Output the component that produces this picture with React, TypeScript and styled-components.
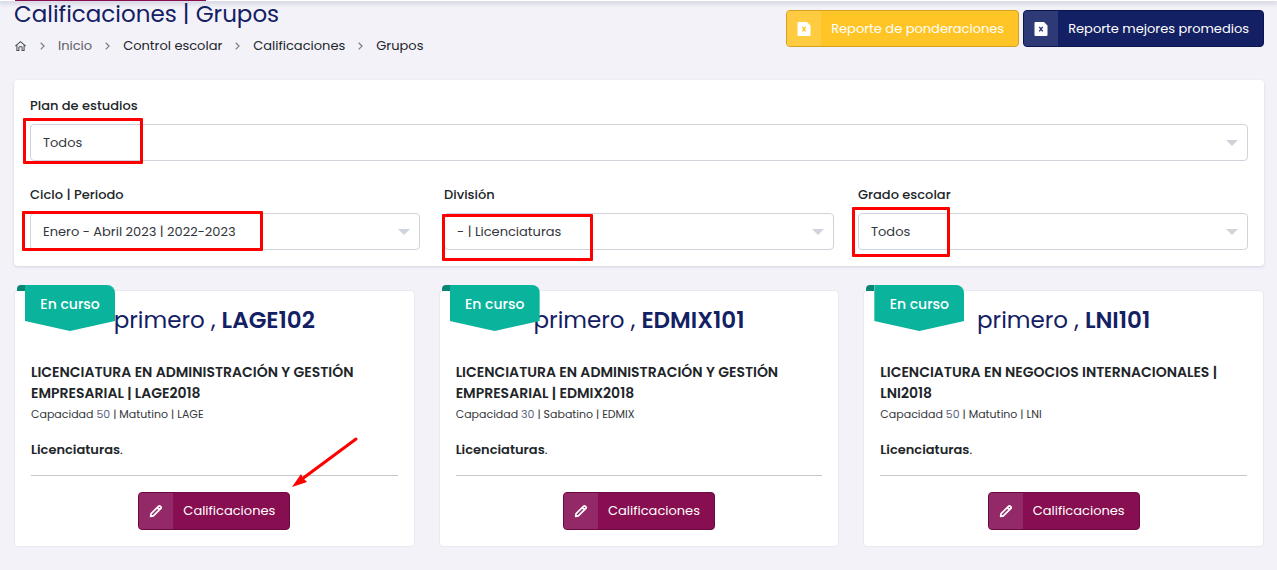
import React from "react";
import styled, { createGlobalStyle } from "styled-components";

const GlobalStyle = createGlobalStyle`
  *, *::before, *::after { box-sizing: border-box; }
  body {
    margin: 0;
    background: #f3f2f9;
    color: #212529;
    font-family: Poppins, Inter, "Open Sans", sans-serif;
    font-size: 13px;
    line-height: 20px;
  }
  h1, h2, h3, p, ol { margin: 0; padding: 0; }
  button, select { font-family: inherit; }
`;

const TopBar = styled.div`
  height: 1px;
  padding: 0 15px;
  background: #fff;
  box-shadow: 0 1px 5px 1px rgba(74, 84, 120, 0.3);
`;

const TopBarTab = styled.div`
  width: 191px;
  height: 1px;
  background: #870e50;
`;

const Page = styled.main`
  padding: 0 13px 23px 14px;
`;

const Header = styled.header`
  display: flex;
  justify-content: space-between;
  align-items: flex-start;
  height: 79px;
`;

const PageTitle = styled.h1`
  color: #132063;
  font-size: 23px;
  font-weight: 400;
  line-height: 27px;
`;

const Breadcrumb = styled.ol`
  display: flex;
  align-items: center;
  gap: 12px;
  margin-top: 8px;
  list-style: none;
  line-height: 20px;
`;

const Crumb = styled.li`
  display: flex;
  align-items: center;
  gap: 12px;
`;

const CrumbLink = styled.a<{ $muted?: boolean }>`
  display: flex;
  color: ${(p) => (p.$muted ? "#5b6068" : "#212529")};
  text-decoration: none;
`;

const HeaderActions = styled.div`
  display: flex;
  gap: 4px;
  padding-top: 9px;
`;

const palette = {
  yellow: { base: "#ffc527", edge: "#d6a021", icon: "#ffcb41" },
  navy: { base: "#132063", edge: "#0a1550", icon: "#2e3a75" },
  wine: { base: "#870e50", edge: "#6b0a40", icon: "#942968" },
};

const ActionButton = styled.button<{ $tone: keyof typeof palette }>`
  display: flex;
  align-items: stretch;
  height: ${(p) => (p.$tone === "wine" ? 38 : 37)}px;
  padding: 0;
  overflow: hidden;
  border: 1px solid ${(p) => palette[p.$tone].edge};
  border-radius: 4px;
  background: ${(p) => palette[p.$tone].base};
  color: #fff;
  font-size: 13px;
  font-weight: 400;
  line-height: 20px;
  white-space: nowrap;
  cursor: pointer;
`;

const ButtonIcon = styled.span<{ $tone: keyof typeof palette }>`
  display: flex;
  flex: 0 0 34px;
  align-items: center;
  justify-content: center;
  background: ${(p) => palette[p.$tone].icon};
`;

const ButtonText = styled.span`
  align-self: center;
  padding: 0 14px 0 10px;
`;

const Filters = styled.form`
  display: grid;
  grid-template-columns: repeat(3, minmax(0, 1fr));
  gap: 24px;
  padding: 16px;
  border-radius: 4px;
  background: #fff;
  box-shadow: 0 1px 3px rgba(60, 60, 100, 0.16);
`;

const Field = styled.div<{ $wide?: boolean }>`
  grid-column: ${(p) => (p.$wide ? "1 / -1" : "auto")};
`;

const FieldLabel = styled.label`
  display: block;
  margin-bottom: 8px;
  font-weight: 500;
  line-height: 20px;
`;

const SelectBox = styled.div`
  position: relative;
`;

const Select = styled.select`
  display: block;
  width: 100%;
  height: 37px;
  padding: 0 32px 0 12px;
  appearance: none;
  border: 1px solid #ced4da;
  border-radius: 4px;
  background: #fff;
  color: #33363b;
  font-size: 13px;
`;

const Caret = styled.span`
  position: absolute;
  top: 16px;
  right: 10px;
  border: 6px solid transparent;
  border-top-color: #ced4da;
  border-bottom-width: 0;
  pointer-events: none;
`;

const Highlight = styled.span<{ $top: number; $left: number; $width: number; $height: number }>`
  position: absolute;
  top: ${(p) => p.$top}px;
  left: ${(p) => p.$left}px;
  width: ${(p) => p.$width}px;
  height: ${(p) => p.$height}px;
  border: 3px solid #fe0000;
  border-radius: 1px;
  pointer-events: none;
`;

const Groups = styled.section`
  display: grid;
  grid-template-columns: repeat(3, minmax(0, 1fr));
  gap: 24px;
  margin-top: 24px;
`;

const Card = styled.article`
  position: relative;
  display: flex;
  flex-direction: column;
  padding: 16px;
  border: 1px solid #e8e8f0;
  border-radius: 4px;
  background: #fff;
`;

const Ribbon = styled.div`
  position: absolute;
  top: -6px;
  left: 10px;
  width: 90px;
  height: 46px;
  padding-top: 9px;
  border-top-right-radius: 8px;
  background: #0ab39c;
  clip-path: polygon(0 0, 100% 0, 100% 78%, 50% 100%, 0 78%);
  color: #fff;
  font-size: 14px;
  font-weight: 500;
  line-height: 20px;
  text-align: center;
`;

const RibbonFold = styled.div`
  position: absolute;
  top: -6px;
  left: 2px;
  width: 8px;
  height: 6px;
  border-top-left-radius: 4px;
  background: #078673;
`;

const GroupTitle = styled.h2`
  color: #132063;
  font-size: 23px;
  font-weight: 400;
  line-height: 27px;
  text-align: center;
`;

const GroupCode = styled.strong`
  font-weight: 600;
`;

const Program = styled.h3`
  margin-top: 28px;
  font-size: 14px;
  font-weight: 600;
  line-height: 21px;
`;

const Capacity = styled.p`
  color: #33363b;
  font-size: 11px;
  line-height: 21px;
`;

const Muted = styled.span`
  color: #5a6780;
`;

const Division = styled.p`
  margin-top: 15px;
  padding-bottom: 15px;
  border-bottom: 1px solid #c6c7c9;
  line-height: 20px;
`;

const DivisionName = styled.strong`
  font-weight: 600;
`;

const CardAction = styled.div`
  position: relative;
  align-self: center;
  margin-top: 16px;
`;

const Arrow = styled.svg`
  position: absolute;
  right: -70px;
  bottom: 40px;
  width: 70px;
  height: 54px;
  pointer-events: none;
`;

const HomeIcon = () => (
  <svg width="13" height="12" viewBox="0 0 13 12" fill="none" stroke="#4d5258" strokeWidth="1.1">
    <path d="M1.3 6.2 6.5 1.7 11.7 6.2M2.9 5.2v5.3h2V7.500c0-.5.3-.8.8-.8h1.600c.5 0 .8.3.8.8v3h2V5.200" />
  </svg>
);

const Chevron = () => (
  <svg width="7" height="10" viewBox="0 0 7 10" fill="none" stroke="#7b7f90" strokeWidth="1.3" aria-hidden="true">
    <path d="m1.700 1.800 3.300 3.300-3.300 3.300" />
  </svg>
);

const ExcelIcon = ({ mark }: { mark: string }) => (
  <svg width="14" height="14" viewBox="0 0 14 14" aria-hidden="true">
    <path d="M1.500 0H10l3.500 3.500V13a1 1 0 0 1-1 1h-11a1 1 0 0 1-1-1V1a1 1 0 0 1 1-1Z" fill="#fff" />
    <path d="m5.300 4.800 3.400 4.600M8.700 4.800 5.300 9.400" stroke={mark} strokeWidth="1.4" />
  </svg>
);

const PencilIcon = () => (
  <svg width="14" height="14" viewBox="0 0 14 14" fill="none" stroke="#fff" strokeWidth="1.7" strokeLinejoin="round" aria-hidden="true">
    <path d="m1.600 12.400.5-2.700 7.600-7.600c.4-.4 1-.4 1.400 0l.8.8c.4.4.4 1 0 1.400l-7.600 7.600-2.700.5ZM8.300 3.600l2.100 2.100" />
  </svg>
);

const crumbs = [
  { label: "Inicio", muted: true },
  { label: "Control escolar" },
  { label: "Calificaciones" },
  { label: "Grupos" },
];

const filters = [
  { id: "plan", label: "Plan de estudios", value: "Todos", wide: true, mark: { top: -6, left: -7, width: 120, height: 46 } },
  { id: "ciclo", label: "Ciclo | Periodo", value: "Enero - Abril 2023 | 2022-2023", mark: { top: -2, left: -8, width: 241, height: 40 } },
  { id: "division", label: "División", value: "- | Licenciaturas", mark: { top: 1, left: -2, width: 151, height: 47 } },
  { id: "grado", label: "Grado escolar", value: "Todos", mark: { top: -6, left: -6, width: 98, height: 50 } },
];

const groups = [
  { code: "LAGE102", program: "LICENCIATURA EN ADMINISTRACIÓN Y GESTIÓN EMPRESARIAL | LAGE2018", seats: 50, rest: "Matutino | LAGE", arrow: true },
  { code: "EDMIX101", program: "LICENCIATURA EN ADMINISTRACIÓN Y GESTIÓN EMPRESARIAL | EDMIX2018", seats: 30, rest: "Sabatino | EDMIX" },
  { code: "LNI101", program: "LICENCIATURA EN NEGOCIOS INTERNACIONALES | LNI2018", seats: 50, rest: "Matutino | LNI" },
];

export default function App() {
  return (
    <>
      <GlobalStyle />
      <TopBar>
        <TopBarTab />
      </TopBar>
      <Page>
        <Header>
          <div>
            <PageTitle>Calificaciones | Grupos</PageTitle>
            <nav aria-label="Ruta">
              <Breadcrumb>
                <Crumb>
                  <CrumbLink href="#" aria-label="Portada">
                    <HomeIcon />
                  </CrumbLink>
                </Crumb>
                {crumbs.map((c) => (
                  <Crumb key={c.label}>
                    <Chevron />
                    <CrumbLink href="#" $muted={c.muted}>
                      {c.label}
                    </CrumbLink>
                  </Crumb>
                ))}
              </Breadcrumb>
            </nav>
          </div>
          <HeaderActions>
            <ActionButton type="button" $tone="yellow">
              <ButtonIcon $tone="yellow">
                <ExcelIcon mark="#ffc527" />
              </ButtonIcon>
              <ButtonText>Reporte de ponderaciones</ButtonText>
            </ActionButton>
            <ActionButton type="button" $tone="navy">
              <ButtonIcon $tone="navy">
                <ExcelIcon mark="#2e3a75" />
              </ButtonIcon>
              <ButtonText>Reporte mejores promedios</ButtonText>
            </ActionButton>
          </HeaderActions>
        </Header>

        <Filters>
          {filters.map((f) => (
            <Field key={f.id} $wide={f.wide}>
              <FieldLabel htmlFor={f.id}>{f.label}</FieldLabel>
              <SelectBox>
                <Select id={f.id}>
                  <option>{f.value}</option>
                </Select>
                <Caret />
                <Highlight $top={f.mark.top} $left={f.mark.left} $width={f.mark.width} $height={f.mark.height} />
              </SelectBox>
            </Field>
          ))}
        </Filters>

        <Groups>
          {groups.map((g) => (
            <Card key={g.code}>
              <GroupTitle>
                primero , <GroupCode>{g.code}</GroupCode>
              </GroupTitle>
              <RibbonFold />
              <Ribbon>En curso</Ribbon>
              <Program>{g.program}</Program>
              <Capacity>
                Capacidad <Muted>{g.seats}</Muted> | {g.rest}
              </Capacity>
              <Division>
                <DivisionName>Licenciaturas</DivisionName>.
              </Division>
              <CardAction>
                <ActionButton type="button" $tone="wine">
                  <ButtonIcon $tone="wine">
                    <PencilIcon />
                  </ButtonIcon>
                  <ButtonText>Calificaciones</ButtonText>
                </ActionButton>
                {g.arrow && (
                  <Arrow viewBox="0 0 70 54" aria-hidden="true">
                    <path d="M66 3 12 43" stroke="#fe0000" strokeWidth="3" strokeLinecap="round" />
                    <path d="m2 51 9-13 2 4 4 4Z" fill="#fe0000" />
                  </Arrow>
                )}
              </CardAction>
            </Card>
          ))}
        </Groups>
      </Page>
    </>
  );
}
